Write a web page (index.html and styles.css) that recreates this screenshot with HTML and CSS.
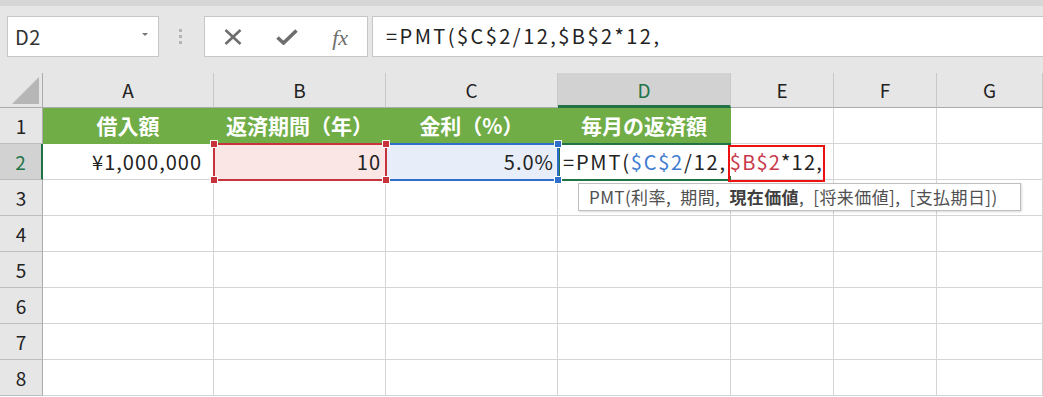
FILE: index.html
```html
<!DOCTYPE html>
<html lang="ja">
<head>
<meta charset="utf-8">
<title>PMT</title>
<link rel="stylesheet" href="styles.css">
</head>
<body>
<div class="topstrip"></div>
<div class="fbar">
  <div class="namebox"><span class="ref">D2</span><span class="caret"></span></div>
  <div class="grip"><i></i><i></i><i></i></div>
  <div class="fnbox">
    <span class="ico"><svg width="20" height="16" viewBox="0 0 20 16"><path d="M2.5 1 L17.5 15 M17.5 1 L2.5 15" stroke="#6e6e6e" stroke-width="2.6" fill="none"/></svg></span>
    <span class="ico"><svg width="22" height="16" viewBox="0 0 22 16"><path d="M1.5 8.5 L7.5 14 L20.5 1.5" stroke="#6e6e6e" stroke-width="3.6" fill="none" stroke-linejoin="miter"/></svg></span>
    <span class="ico fx">fx</span>
  </div>
  <div class="formula">=PMT($C$2/12,$B$2*12,</div>
</div>
<div class="sheet">
  <div class="corner"><svg width="27" height="27" viewBox="0 0 27 27"><path d="M27 0 L27 27 L0 27 Z" fill="#b6b6b6"/></svg></div>
  <div class="ch">A</div>
  <div class="ch">B</div>
  <div class="ch">C</div>
  <div class="ch ch-sel">D</div>
  <div class="ch">E</div>
  <div class="ch">F</div>
  <div class="ch">G</div>

  <div class="rh">1</div>
  <div class="c hd">借入額</div>
  <div class="c hd">返済期間（年）</div>
  <div class="c hd">金利（%）</div>
  <div class="c hd">毎月の返済額</div>
  <div class="c"></div>
  <div class="c"></div>
  <div class="c"></div>

  <div class="rh rh-sel">2</div>
  <div class="c num">¥1,000,000</div>
  <div class="c num b2">10<div class="sel sel-red"><i class="h tl"></i><i class="h tr"></i><i class="h bl"></i><i class="h br"></i></div></div>
  <div class="c num c2">5.0%<div class="sel sel-blue"><i class="h tl"></i><i class="h tr"></i><i class="h bl"></i><i class="h br"></i></div></div>
  <div class="c d2">
    <div class="active"></div>
    <span class="ftext">=PMT(<span class="rb">$C$2</span>/12,<span class="tail"><span class="rr">$B$2</span>*12,</span></span>
    <div class="redbox"></div>
    <div class="tip">PMT(利率, 期間, <b>現在価値</b>, [将来価値], [支払期日])</div>
  </div>
  <div class="c"></div>
  <div class="c"></div>
  <div class="c"></div>

  <div class="rh">3</div><div class="c"></div><div class="c"></div><div class="c"></div><div class="c"></div><div class="c"></div><div class="c"></div><div class="c"></div>
  <div class="rh">4</div><div class="c"></div><div class="c"></div><div class="c"></div><div class="c"></div><div class="c"></div><div class="c"></div><div class="c"></div>
  <div class="rh">5</div><div class="c"></div><div class="c"></div><div class="c"></div><div class="c"></div><div class="c"></div><div class="c"></div><div class="c"></div>
  <div class="rh">6</div><div class="c"></div><div class="c"></div><div class="c"></div><div class="c"></div><div class="c"></div><div class="c"></div><div class="c"></div>
  <div class="rh">7</div><div class="c"></div><div class="c"></div><div class="c"></div><div class="c"></div><div class="c"></div><div class="c"></div><div class="c"></div>
  <div class="rh">8</div><div class="c"></div><div class="c"></div><div class="c"></div><div class="c"></div><div class="c"></div><div class="c"></div><div class="c"></div>
</div>
</body>
</html>
```
FILE: styles.css
```css
* { box-sizing: border-box; }
html, body { margin: 0; padding: 0; }
body {
  width: 1043px;
  height: 397px;
  overflow: hidden;
  background: #e6e6e6;
  font-family: "Noto Sans CJK JP", "Noto Sans", sans-serif;
  color: #222;
}
.topstrip { height: 6px; background: #d6d6d6; }
.fbar {
  display: flex;
  align-items: flex-start;
  height: 67px;
  padding: 10px 0 0 7px;
}
.namebox {
  width: 152px;
  height: 41px;
  background: #fff;
  border: 1px solid #c6c6c6;
  display: flex;
  align-items: center;
  justify-content: space-between;
  padding: 0 10px 0 7px;
}
.ref { font-size: 20px; color: #333; letter-spacing: 0.5px; }
.caret {
  width: 0; height: 0;
  border-left: 3px solid transparent;
  border-right: 3px solid transparent;
  border-top: 3px solid #777;
  margin-top: -4px;
}
.grip {
  margin-left: 20px;
  margin-top: 13px;
  display: flex;
  flex-direction: column;
  gap: 3px;
}
.grip i { display: block; width: 3px; height: 3px; background: #b4b4b4; }
.fnbox {
  margin-left: 22px;
  width: 164px;
  height: 41px;
  background: #fff;
  border: 1px solid #c6c6c6;
  display: flex;
  align-items: center;
  padding-left: 1px;
}
.ico {
  width: 54px;
  display: flex;
  justify-content: center;
  align-items: center;
}
.fx {
  font-family: "Liberation Serif", "DejaVu Serif", serif;
  font-style: italic;
  font-size: 22px;
  color: #6e6e6e;
  margin-top: 2px;
}
.formula {
  margin-left: 4px;
  flex: 1;
  height: 41px;
  background: #fff;
  border: 1px solid #c6c6c6;
  border-right: none;
  padding-left: 13px;
  font-size: 20px;
  line-height: 38px;
  letter-spacing: 2.45px;
  color: #222;
  white-space: nowrap;
}
.sheet {
  display: grid;
  grid-template-columns: 43px 171px 172px 172px 173px 103px 103px 106px;
  grid-template-rows: 35px repeat(8, 36px) 4px;
  background: #fff;
}
.corner {
  background: #e6e6e6;
  border-right: 1px solid #ababab;
  border-bottom: 1px solid #ababab;
  display: flex;
  justify-content: flex-end;
  align-items: flex-end;
  padding: 0 3px 3px 0;
}
.corner svg { display: block; }
.ch {
  background: #e6e6e6;
  border-right: 1px solid #c8c8c8;
  border-bottom: 1px solid #ababab;
  text-align: center;
  font-size: 19px;
  line-height: 34px;
  color: #222;
}
.ch-sel {
  background: #d2d2d2;
  color: #217346;
  border-bottom: 3px solid #217346;
}
.rh {
  background: #e6e6e6;
  border-right: 1px solid #ababab;
  border-bottom: 1px solid #bdbdbd;
  text-align: center;
  font-size: 19px;
  line-height: 35px;
  color: #222;
}
.rh-sel {
  background: #d2d2d2;
  color: #217346;
  border-right: 2px solid #217346;
}
.c {
  position: relative;
  border-right: 1px solid #d4d4d4;
  border-bottom: 1px solid #d4d4d4;
  font-size: 20px;
  line-height: 35px;
  white-space: nowrap;
}
.hd {
  background: #70ad47;
  border-right-color: #70ad47;
  border-bottom-color: #70ad47;
  color: #fff;
  font-weight: bold;
  font-size: 21px;
  text-align: center;
  line-height: 34px;
}
.num {
  text-align: right;
  padding-right: 11px;
  letter-spacing: 1px;
}
.b2 { background: #fbe6e6; padding-right: 4px; }
.c2 { background: #e7eef9; padding-right: 3px; }
.sel {
  position: absolute;
  left: -1px;
  top: -1px;
  width: 174px;
  height: 38px;
  border: 2px solid;
}
.sel-red { border-color: #c8323c; z-index: 3; }
.sel-blue { border-color: #2f6fcb; z-index: 2; }
.h {
  position: absolute;
  width: 8px;
  height: 8px;
  border: 1px solid #fff;
}
.sel-red .h { background: #c8323c; }
.sel-blue .h { background: #2f6fcb; }
.h.tl { left: -5px; top: -5px; }
.h.tr { right: -5px; top: -5px; }
.h.bl { left: -5px; bottom: -5px; }
.h.br { right: -5px; bottom: -5px; }
.d2 { overflow: visible; padding-left: 5px; }
.active {
  position: absolute;
  left: 0;
  top: -1px;
  width: 173px;
  height: 38px;
  border: 2px solid #217346;
}
.ftext {
  position: relative;
  z-index: 1;
  letter-spacing: 1.8px;
  background: #fff;
}
.tail { letter-spacing: 1.2px; margin-left: 3px; }
.rb { color: #3f7bd0; }
.rr { color: #c83a4a; }
.redbox {
  position: absolute;
  left: 170px;
  top: 1px;
  width: 97px;
  height: 37px;
  border: 2px solid #ee1111;
  z-index: 4;
}
.tip {
  position: absolute;
  left: 20px;
  top: 39px;
  width: 443px;
  height: 28px;
  background: #fff;
  border: 1px solid #bfbfbf;
  box-shadow: 1px 1px 2px rgba(0,0,0,0.15);
  padding-left: 10px;
  font-size: 17px;
  line-height: 25px;
  color: #505050;
  letter-spacing: 0.4px;
  word-spacing: 5px;
  z-index: 5;
}
.tip b { color: #404040; }
```
